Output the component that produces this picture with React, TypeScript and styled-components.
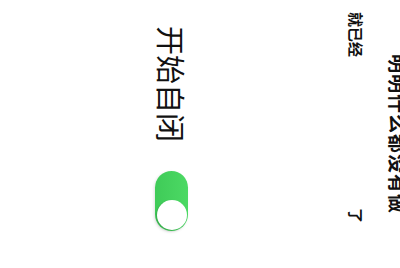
import styled, { createGlobalStyle } from "styled-components";

const GlobalStyle = createGlobalStyle`
  html, body {
    margin: 0;
    padding: 0;
    background: #ffffff;
  }
  body {
    font-family: "Noto Sans CJK SC", "Noto Sans", sans-serif;
    color: #111111;
  }
`;

// the whole card is typeset sideways: columns run right to left,
// glyphs turned a quarter clockwise
const Page = styled.main`
  writing-mode: vertical-rl;
  text-orientation: sideways;
  width: 400px;
  height: 268px;
  overflow: hidden;
  background: #ffffff;
`;

const Title = styled.h1`
  margin: 0;
  margin-block-start: -8px;
  font-size: 19px;
  line-height: 1;
  font-weight: 700;
  letter-spacing: 1px;
  text-align: center;
`;

const Line = styled.p`
  margin: 0;
  margin-block-start: 25px;
  display: flex;
  padding-inline: 12px 45px;
  font-size: 15px;
  line-height: 1;
  font-weight: 700;
`;

const Tail = styled.span`
  margin-inline-start: auto;
`;

const Row = styled.section`
  margin-block-start: 161px;
  display: flex;
  align-items: center;
  gap: 29px;
  padding-inline-start: 26px;
`;

const BigText = styled.span`
  font-size: 29px;
  line-height: 1;
  font-weight: 400;
`;

const Switch = styled.div<{ $on: boolean }>`
  writing-mode: horizontal-tb;
  width: 33px;
  height: 60px;
  border-radius: 17px;
  background: ${(p) => (p.$on ? "linear-gradient(90deg, #3fcb58, #4cd964)" : "#e5e5ea")};
  box-shadow: -1px 1px 3px rgba(0, 0, 0, 0.12);
  display: flex;
  flex-direction: column;
  justify-content: ${(p) => (p.$on ? "flex-end" : "flex-start")};
  align-items: center;
  padding: 1.5px 0;
  box-sizing: border-box;
`;

const Knob = styled.div`
  width: 30px;
  height: 30px;
  border-radius: 50%;
  background: #ffffff;
  box-shadow: -1px 1px 2px rgba(0, 0, 0, 0.18);
`;

export default function App() {
  return (
    <>
      <GlobalStyle />
      <Page>
        <Title>明明什么都没有做</Title>
        <Line>
          <span>就已经</span>
          <Tail>了</Tail>
        </Line>
        <Row>
          <BigText>开始自闭</BigText>
          <Switch $on>
            <Knob />
          </Switch>
        </Row>
      </Page>
    </>
  );
}
